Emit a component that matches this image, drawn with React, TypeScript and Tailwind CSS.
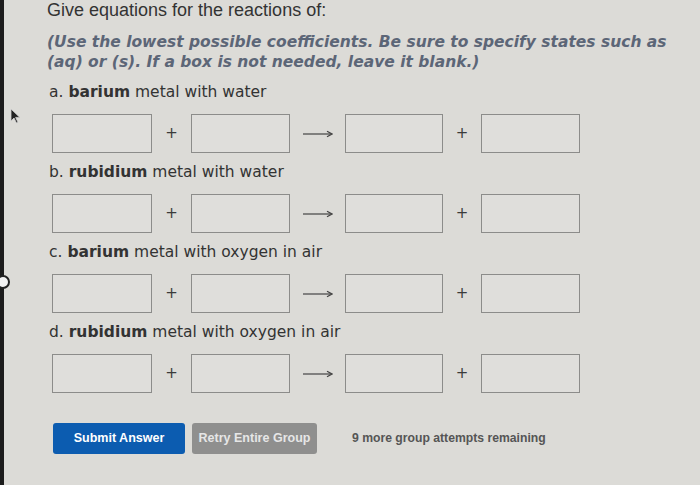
import React from "react"

const rows = [
  { letter: "a.", metal: "barium", rest: "metal with water" },
  { letter: "b.", metal: "rubidium", rest: "metal with water" },
  { letter: "c.", metal: "barium", rest: "metal with oxygen in air" },
  { letter: "d.", metal: "rubidium", rest: "metal with oxygen in air" },
]

function Box({ w }: { w: string }) {
  return <div className={`h-[39px] ${w} border border-[#8c8c8a] bg-[#dfdedb]`} />
}

function Plus() {
  return <span className="text-[15px] leading-none text-[#3b3b3b] font-['DejaVu_Sans',sans-serif]">+</span>
}

function Arrow() {
  return (
    <svg width="30" height="8" viewBox="0 0 30 8">
      <line x1="0" y1="4" x2="28" y2="4" stroke="#444" strokeWidth="1.2" />
      <path d="M24 1.2 L29 4 L24 6.8" fill="none" stroke="#444" strokeWidth="1.2" />
    </svg>
  )
}

function EquationRow() {
  return (
    <div className="flex items-center pl-[48px]">
      <Box w="w-[100px]" />
      <div className="w-[39px] flex justify-center"><Plus /></div>
      <Box w="w-[99px]" />
      <div className="w-[55px] flex justify-center"><Arrow /></div>
      <Box w="w-[98px]" />
      <div className="w-[38px] flex justify-center"><Plus /></div>
      <Box w="w-[99px]" />
    </div>
  )
}

export default function App() {
  return (
    <div className="relative flex w-[700px] h-[485px] overflow-hidden bg-[#dcdbd7]">
      {/* bezel edge of the monitor */}
      <div className="w-[4px] h-full bg-[#1c1c1c]" />

      <div className="flex-1 flex flex-col">
        <div className="pl-[43px] h-[20px] text-[18px] leading-[20px] text-[#333] font-['Liberation_Sans',Arial,sans-serif]">
          Give equations for the reactions of:
        </div>

        <div className="mt-[12px] pl-[43px] text-[15.5px] leading-[20px] font-bold italic text-[#5c6677] font-['DejaVu_Sans',Verdana,sans-serif]">
          (Use the lowest possible coefficients. Be sure to specify states such as
          <br />
          (aq) or (s). If a box is not needed, leave it blank.)
        </div>

        <div className="mt-[10px] flex flex-col gap-[9px]">
          {rows.map((r) => (
            <div key={r.letter} className="flex flex-col gap-[12px]">
              <div className="pl-[45px] h-[20px] text-[15.5px] leading-[20px] text-[#333] font-['DejaVu_Sans',Verdana,sans-serif]">
                {r.letter} <span className="font-bold">{r.metal}</span> {r.rest}
              </div>
              <EquationRow />
            </div>
          ))}
        </div>

        <div className="mt-[30px] pl-[49px] flex items-center font-['Liberation_Sans',Arial,sans-serif] font-bold">
          <button className="w-[132px] h-[31px] rounded-[3px] bg-[#0c5cb0] text-white text-[12.5px]">
            Submit Answer
          </button>
          <button className="ml-[7px] w-[125px] h-[31px] rounded-[3px] bg-[#8f8f8e] text-[#e6e6e6] text-[12.5px]">
            Retry Entire Group
          </button>
          <span className="ml-[35px] text-[12.2px] text-[#555]">9 more group attempts remaining</span>
        </div>
      </div>

      {/* mouse cursor */}
      <svg className="absolute left-[10px] top-[108px]" width="11" height="16" viewBox="0 0 11 16">
        <path d="M1 1 L1 13 L4 10 L6.5 15 L8 14.3 L5.6 9.4 L9.8 9.4 Z" fill="#222" stroke="#cfcfcf" strokeWidth="0.8" />
      </svg>

      {/* small badge at left edge */}
      <div className="absolute left-[-4px] top-[275px] w-[14px] h-[14px] rounded-full bg-[#f2f2f2] border-[2px] border-[#222]" />
    </div>
  )
}
